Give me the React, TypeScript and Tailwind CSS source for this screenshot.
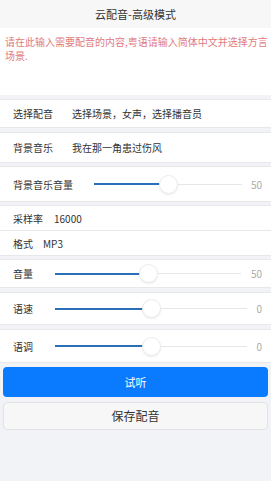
const font = { fontFamily: '"Noto Sans CJK SC", "Noto Sans", sans-serif' };

function Slider({ start, pos, end, value }: { start: number; pos: number; end: number; value: string }) {
  // start/pos/end are x positions inside the row
  return (
    <div className="flex flex-1 items-center">
      <div className="shrink-0" style={{ width: start }} />
      <div className="relative h-5 flex items-center" style={{ width: end - start }}>
        <div className="absolute left-0 right-0 h-px bg-[#e6e6e6]" />
        <div className="absolute left-0 h-[2px] bg-[#2b6fb8]" style={{ width: pos - start }} />
        <div
          className="absolute w-[19px] h-[19px] rounded-full bg-white border border-[#ececec] shadow-[0_1px_2px_rgba(0,0,0,0.08)]"
          style={{ left: pos - start - 9.5 }}
        />
      </div>
      <div className="flex-1 text-right pr-[9px] text-[10px] text-[#aaa]">{value}</div>
    </div>
  );
}

function SliderRow({ label, h, start, pos, end, value }: { label: string; h: string; start: number; pos: number; end: number; value: string }) {
  return (
    <div className={`relative flex items-center bg-white border-y border-[#e8e8ea] ${h}`}>
      <span className="absolute left-[13px] text-[10px] text-[#333]">{label}</span>
      <Slider start={start} pos={pos} end={end} value={value} />
    </div>
  );
}

export default function App() {
  return (
    <div className="w-[271px] h-[481px] bg-[#f1f3f6] overflow-hidden" style={font}>
      <div className="h-[28px] bg-[#f7f7f7] flex items-center justify-center text-[11px] text-[#333]">
        云配音-高级模式
      </div>
      <div className="h-[67px] bg-white pl-[5px] pt-[7px] text-[10px] leading-[14px] text-[#e07a7d]">
        请在此输入需要配音的内容,粤语请输入简体中文并选择方言场景.
      </div>

      <div className="mt-[4px] h-[29px] bg-white border-y border-[#e8e8ea] flex items-center pl-[13px] text-[10px] text-[#333]">
        <span className="w-[59px]">选择配音</span>
        <span>选择场景，女声，选择播音员</span>
      </div>
      <div className="mt-[4px] h-[31px] bg-white border-y border-[#e8e8ea] flex items-center pl-[13px] text-[10px] text-[#333]">
        <span className="w-[59px]">背景音乐</span>
        <span>我在那一角患过伤风</span>
      </div>
      <div className="mt-[3px]">
        <SliderRow label="背景音乐音量" h="h-[36px]" start={94} pos={168} end={242} value="50" />
      </div>
      <div className="mt-[3px] h-[26px] bg-white border-y border-[#e8e8ea] flex items-center pl-[13px] text-[10px] text-[#333]">
        <span className="mr-[11px]">采样率</span>
        <span>16000</span>
      </div>
      <div className="h-[25px] bg-white border-b border-[#e8e8ea] flex items-center pl-[13px] text-[10px] text-[#333]">
        <span className="mr-[10px]">格式</span>
        <span>MP3</span>
      </div>
      <div className="mt-[3px]">
        <SliderRow label="音量" h="h-[29px]" start={55} pos={148} end={241} value="50" />
      </div>
      <div className="mt-[4px]">
        <SliderRow label="语速" h="h-[33px]" start={55} pos={151} end={247} value="0" />
      </div>
      <div className="mt-[4px]">
        <SliderRow label="语调" h="h-[34px]" start={55} pos={151} end={247} value="0" />
      </div>

      <div className="px-[3px] pt-[4px] flex flex-col gap-[5px]">
        <button className="h-[30px] w-full rounded-[4px] bg-[#0a7aff] text-white text-[11px]">试听</button>
        <button className="h-[28px] w-full rounded-[4px] bg-[#f7f7f7] border border-[#e3e3e3] text-[#333] text-[12px]">
          保存配音
        </button>
      </div>
    </div>
  );
}
